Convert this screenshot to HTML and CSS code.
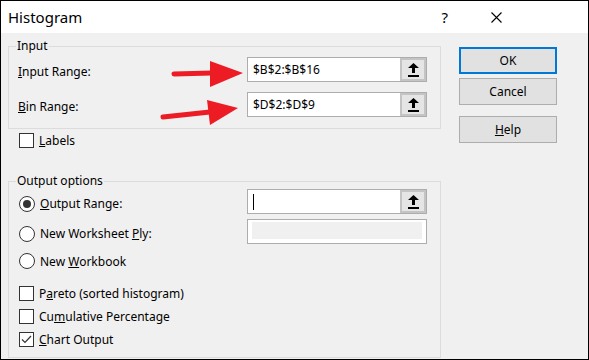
FILE: index.html
```html
<!DOCTYPE html>
<html lang="en">
<head>
    <meta charset="UTF-8">
    <meta name="viewport" content="width=device-width, initial-scale=1.0">
    <title>Histogram</title>
    <link rel="stylesheet" href="styles.css">
</head>
<body>
    <div class="window">
        <div class="titlebar">
            <span class="title">Histogram</span>
            <span class="help-q">?</span>
            <svg class="close" width="11" height="11" viewBox="0 0 11 11">
                <path d="M0.5 0.5 L10.5 10.5 M10.5 0.5 L0.5 10.5" stroke="#000" stroke-width="1.1" fill="none"/>
            </svg>
        </div>

        <div class="body">
            <div class="main">
                <fieldset class="group group-input">
                    <legend>Input</legend>
                    <div class="row">
                        <span class="field-label"><u>I</u>nput Range:</span>
                        <div class="range">
                            <span class="range-value">$B$2:$B$16</span>
                            <span class="pick">
                                <svg width="11" height="14" viewBox="0 0 11 14"><path d="M5.5 0 L11 5 L7 5 L7 10 L4 10 L4 5 L0 5 Z M0 12 H11 V14 H0 Z" fill="#000"/></svg>
                            </span>
                        </div>
                    </div>
                    <div class="row">
                        <span class="field-label"><u>B</u>in Range:</span>
                        <div class="range">
                            <span class="range-value">$D$2:$D$9</span>
                            <span class="pick">
                                <svg width="11" height="14" viewBox="0 0 11 14"><path d="M5.5 0 L11 5 L7 5 L7 10 L4 10 L4 5 L0 5 Z M0 12 H11 V14 H0 Z" fill="#000"/></svg>
                            </span>
                        </div>
                    </div>
                </fieldset>

                <div class="option labels-row">
                    <span class="box"></span>
                    <span><u>L</u>abels</span>
                </div>

                <fieldset class="group group-output">
                    <legend>Output options</legend>
                    <div class="row">
                        <div class="option field-label">
                            <span class="radio checked"></span>
                            <span><u>O</u>utput Range:</span>
                        </div>
                        <div class="range">
                            <span class="range-value"><span class="caret"></span></span>
                            <span class="pick">
                                <svg width="11" height="14" viewBox="0 0 11 14"><path d="M5.5 0 L11 5 L7 5 L7 10 L4 10 L4 5 L0 5 Z M0 12 H11 V14 H0 Z" fill="#000"/></svg>
                            </span>
                        </div>
                    </div>
                    <div class="row row-ply">
                        <div class="option field-label">
                            <span class="radio"></span>
                            <span>New Worksheet <u>P</u>ly:</span>
                        </div>
                        <div class="range disabled"><div class="fill"></div></div>
                    </div>
                    <div class="option row-small row-book">
                        <span class="radio"></span>
                        <span>New <u>W</u>orkbook</span>
                    </div>
                    <div class="option row-small row-pareto">
                        <span class="box"></span>
                        <span>P<u>a</u>reto (sorted histogram)</span>
                    </div>
                    <div class="option row-small row-tight">
                        <span class="box"></span>
                        <span>Cu<u>m</u>ulative Percentage</span>
                    </div>
                    <div class="option row-small row-tight">
                        <span class="box">
                            <svg width="13" height="13" viewBox="0 0 13 13"><path d="M2 6.5 L5 9.5 L11 3" stroke="#333" stroke-width="1.2" fill="none"/></svg>
                        </span>
                        <span><u>C</u>hart Output</span>
                    </div>
                </fieldset>
            </div>

            <div class="buttons">
                <button class="btn btn-default">OK</button>
                <button class="btn btn-cancel">Cancel</button>
                <button class="btn btn-help"><u>H</u>elp</button>
            </div>
        </div>

        <!-- annotation arrows drawn over the dialog -->
        <svg class="arrows" width="589" height="360" viewBox="0 0 589 360">
            <path d="M174 74 L212 73" stroke="#ed1c24" stroke-width="5" stroke-linecap="round"/>
            <polygon points="210,61 243,73 210,87" fill="#ed1c24"/>
            <path d="M163 117 L210 112" stroke="#ed1c24" stroke-width="5" stroke-linecap="round"/>
            <polygon points="207,100 238,108 210,125" fill="#ed1c24"/>
        </svg>
    </div>
</body>
</html>
```

FILE: styles.css
```css
* {
    box-sizing: border-box;
}
body {
    margin: 0;
    font-family: "Noto Sans", "Segoe UI", sans-serif;
    font-size: 12px;
    color: #000;
}
.window {
    position: relative;
    width: 589px;
    height: 360px;
    border: 1px solid #000;
    background-color: #f0f0f0;
    overflow: hidden;
}
.titlebar {
    height: 32px;
    background-color: #fff;
    display: flex;
    align-items: center;
    padding-left: 7px;
}
.title {
    flex: 1;
    font-size: 15px;
}
.help-q {
    font-size: 15px;
    margin-right: 43px;
}
.close {
    margin-right: 86px;
}
.body {
    display: flex;
    padding: 6px 0 0 7px;
}
.main {
    width: 433px;
}
.group {
    margin: 0;
    border: 1px solid #dcdcdc;
    min-width: 0;
}
.group legend {
    line-height: 14px;
    padding: 0 1px;
    margin-left: -2px;
}
.group-input {
    padding: 4px 13px 11px 9px;
}
.group-output {
    margin-top: 24px;
    padding: 1px 13px 8px 9px;
}
.row {
    display: flex;
    align-items: center;
    justify-content: space-between;
    height: 25px;
}
.field-label {
    margin-top: 4px;
}
.group-input .row + .row {
    margin-top: 10px;
}
.row-ply {
    margin-top: 5px;
}
.row-small {
    height: 20px;
}
.row-book {
    margin-top: 7px;
}
.row-pareto {
    margin-top: 12px;
}
.row-tight {
    margin-top: 3px;
}
.option {
    display: flex;
    align-items: center;
    gap: 5px;
    padding-left: 1px;
}
.labels-row {
    height: 20px;
    margin-top: 1px;
    padding-left: 11px;
}
.box {
    width: 15px;
    height: 15px;
    border: 1px solid #333;
    background-color: #fff;
    display: flex;
    align-items: center;
    justify-content: center;
}
.radio {
    width: 16px;
    height: 16px;
    border: 1px solid #333;
    border-radius: 50%;
    background-color: #fff;
    display: flex;
    align-items: center;
    justify-content: center;
}
.radio.checked::after {
    content: "";
    width: 8px;
    height: 8px;
    border-radius: 50%;
    background-color: #333;
}
.range {
    width: 180px;
    height: 25px;
    border: 1px solid #adadad;
    background-color: #fff;
    display: flex;
}
.range-value {
    flex: 1;
    display: flex;
    align-items: center;
    padding-left: 5px;
}
.caret {
    width: 1px;
    height: 16px;
    background-color: #000;
}
.pick {
    width: 26px;
    background-color: #e5e5e5;
    border: 2px solid #c4c4c4;
    display: flex;
    align-items: center;
    justify-content: center;
}
.range.disabled {
    padding: 2px 4px 4px 4px;
}
.range.disabled .fill {
    flex: 1;
    background-color: #f0f0f0;
}
.buttons {
    display: flex;
    flex-direction: column;
    margin-left: 18px;
    padding-top: 8px;
}
.btn {
    width: 98px;
    height: 27px;
    padding: 0;
    font: inherit;
    color: #000;
    background-color: #e1e1e1;
    border: 1px solid #adadad;
}
.btn-default {
    border: 2px solid #0078d7;
}
.btn-cancel {
    margin-top: 4px;
}
.btn-help {
    margin-top: 11px;
}
.arrows {
    position: absolute;
    left: -1px;
    top: -1px;
    pointer-events: none;
}
```
